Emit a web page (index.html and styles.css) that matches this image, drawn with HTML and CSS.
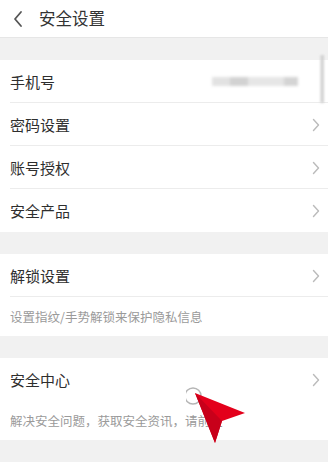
FILE: index.html
```html
<!DOCTYPE html>
<html lang="zh">
<head>
<meta charset="utf-8">
<link rel="stylesheet" href="styles.css">
</head>
<body>
<div class="page">
  <header class="topbar">
    <svg class="back" width="12" height="18" viewBox="0 0 12 18"><path d="M9 2 L3 9 L9 16" fill="none" stroke="#555" stroke-width="1.8" stroke-linecap="round" stroke-linejoin="round"/></svg>
    <span class="title">安全设置</span>
  </header>
  <div class="gap first"></div>
  <section class="group">
    <div class="row">
      <span class="label">手机号</span>
      <span class="blur"><i class="b1"></i><i class="b2"></i><i class="b3"></i><i class="b4"></i></span>
    </div>
    <div class="row">
      <span class="label">密码设置</span>
      <svg class="chev" width="8" height="14" viewBox="0 0 8 14"><path d="M1.5 1.5 L6.5 7 L1.5 12.5" fill="none" stroke="#bbb" stroke-width="1.4" stroke-linecap="round" stroke-linejoin="round"/></svg>
    </div>
    <div class="row">
      <span class="label">账号授权</span>
      <svg class="chev" width="8" height="14" viewBox="0 0 8 14"><path d="M1.5 1.5 L6.5 7 L1.5 12.5" fill="none" stroke="#bbb" stroke-width="1.4" stroke-linecap="round" stroke-linejoin="round"/></svg>
    </div>
    <div class="row last">
      <span class="label">安全产品</span>
      <svg class="chev" width="8" height="14" viewBox="0 0 8 14"><path d="M1.5 1.5 L6.5 7 L1.5 12.5" fill="none" stroke="#bbb" stroke-width="1.4" stroke-linecap="round" stroke-linejoin="round"/></svg>
    </div>
  </section>
  <div class="gap"></div>
  <section class="group">
    <div class="row">
      <span class="label">解锁设置</span>
      <svg class="chev" width="8" height="14" viewBox="0 0 8 14"><path d="M1.5 1.5 L6.5 7 L1.5 12.5" fill="none" stroke="#bbb" stroke-width="1.4" stroke-linecap="round" stroke-linejoin="round"/></svg>
    </div>
    <div class="desc">设置指纹/手势解锁来保护隐私信息</div>
  </section>
  <div class="gap"></div>
  <section class="group center">
    <div class="row nodiv">
      <span class="label">安全中心</span>
      <svg class="chev" width="8" height="14" viewBox="0 0 8 14"><path d="M1.5 1.5 L6.5 7 L1.5 12.5" fill="none" stroke="#bbb" stroke-width="1.4" stroke-linecap="round" stroke-linejoin="round"/></svg>
    </div>
    <div class="desc">解决安全问题，获取安全资讯，请前往</div>
    <svg class="pointer" width="70" height="70" viewBox="0 0 70 70">
      <circle cx="7" cy="12" r="8" fill="none" stroke="#b5b5b5" stroke-width="1.5"/>
      <path d="M9 9 L59 29 L36 37 L29 59 Z" fill="#e3001b"/>
      <path d="M9 9 L36 37 L29 59 Z" fill="#c8001a"/>
    </svg>
  </section>
  <div class="tail"></div>
  <div class="edge"></div>
</div>
</body>
</html>
```
FILE: styles.css
```css
html, body {
  margin: 0;
  padding: 0;
}
body {
  font-family: "Noto Sans CJK SC", "Noto Sans", sans-serif;
  background: #f1f1f1;
  width: 328px;
  height: 462px;
  overflow: hidden;
}
.page {
  display: flex;
  flex-direction: column;
  position: relative;
}
.topbar {
  height: 37px;
  background: #fff;
  border-bottom: 1px solid #e6e6e6;
  display: flex;
  align-items: center;
  padding-left: 12px;
  gap: 15px;
}
.back {
  display: block;
}
.title {
  font-size: 16.5px;
  color: #333;
  line-height: 1;
}
.gap {
  height: 22px;
  background: #f1f1f1;
}
.group {
  background: #fff;
  position: relative;
}
.row {
  height: 43px;
  display: flex;
  align-items: center;
  justify-content: space-between;
  padding: 0 8px 0 10px;
  position: relative;
}
.row::after {
  content: "";
  position: absolute;
  left: 10px;
  right: 0;
  bottom: 0;
  height: 1px;
  background: #ececec;
}
.row.last::after,
.row.nodiv::after {
  display: none;
}
.label {
  font-size: 15px;
  color: #2e2e2e;
}
.chev {
  display: block;
}
.blur {
  display: flex;
  align-items: center;
  height: 10px;
  margin-right: 22px;
  filter: blur(1.5px);
}
.blur i {
  display: block;
  height: 9px;
}
.b1 { width: 18px; background: #e2e2e2; }
.b2 { width: 18px; background: #d2d2d2; }
.b3 { width: 36px; background: #e6e6e6; }
.b4 { width: 14px; background: #d4d4d4; }
.desc {
  height: 39px;
  display: flex;
  align-items: center;
  padding-left: 10px;
  font-size: 12.5px;
  color: #9a9a9a;
}
.pointer {
  position: absolute;
  left: 186px;
  top: 26px;
}
.tail {
  height: 30px;
  background: #f1f1f1;
}
.edge {
  position: absolute;
  left: 320px;
  top: 55px;
  width: 4px;
  height: 48px;
  background: linear-gradient(to right, #d8d8d8, #c4c4c4);
  filter: blur(0.8px);
  opacity: 0.8;
}
```
